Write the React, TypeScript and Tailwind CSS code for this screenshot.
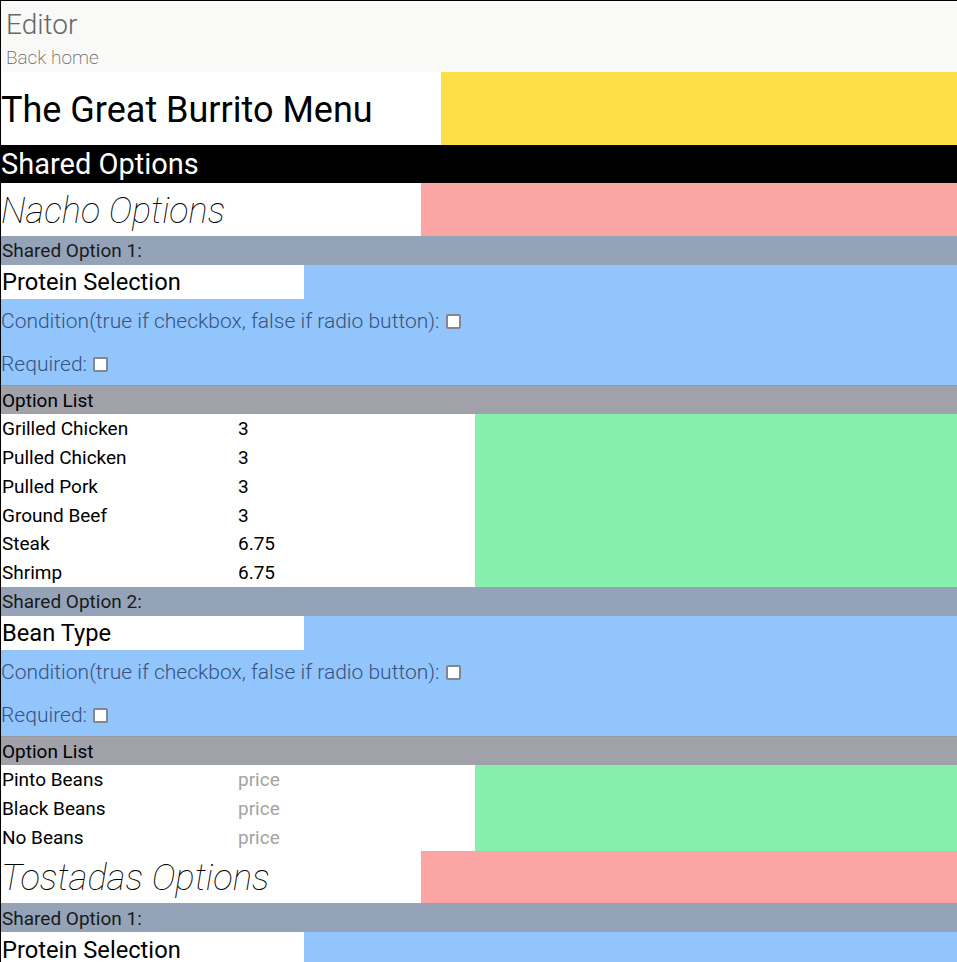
import React from "react";

type Opt = { name: string; price?: string };

function Checkbox() {
  return (
    <span className="inline-block w-[15px] h-[15px] bg-white border-2 border-[#85858f] rounded-[2px] ml-[6px] shrink-0" />
  );
}

function SharedOption({ index, title, options }: { index: number; title: string; options: Opt[] }) {
  return (
    <div>
      <div className="h-[29px] bg-[#94a3b8] flex items-center pl-[1px] pt-[2px] text-[19px] text-[#1a1a1a]">
        Shared Option {index}:
      </div>
      <div className="bg-[#93c5fd]">
        <div className="h-[34px] w-[303px] bg-white flex items-center pl-[1px] pt-[2px] text-[23.7px] text-black">
          {title}
        </div>
        <div className="h-[43px] flex items-center pt-[2px] text-[21px] font-light text-[#36527e]">
          <span>Condition(true if checkbox, false if radio button):</span>
          <Checkbox />
        </div>
        <div className="h-[43px] flex items-center pt-[2px] text-[21px] font-light text-[#36527e]">
          <span>Required:</span>
          <Checkbox />
        </div>
      </div>
      <div className="h-[29px] bg-[#a1a1aa] border-t border-[#999] flex items-center pl-[1px] pt-[2px] text-[19px] text-black">
        Option List
      </div>
      <div className="bg-[#86efac]">
        {options.map((o) => (
          <div key={o.name} className="flex w-[474px] bg-white h-[28.83px] items-center pt-[2px] text-[19px]">
            <div className="w-[237px] pl-[1px] text-black">{o.name}</div>
            <div className={o.price ? "text-black" : "text-[#a3a3a3]"}>{o.price ?? "price"}</div>
          </div>
        ))}
      </div>
    </div>
  );
}

const proteins: Opt[] = [
  { name: "Grilled Chicken", price: "3" },
  { name: "Pulled Chicken", price: "3" },
  { name: "Pulled Pork", price: "3" },
  { name: "Ground Beef", price: "3" },
  { name: "Steak", price: "6.75" },
  { name: "Shrimp", price: "6.75" },
];

const beans: Opt[] = [{ name: "Pinto Beans" }, { name: "Black Beans" }, { name: "No Beans" }];

export default function App() {
  return (
    <div className="font-['Roboto',sans-serif] border-l border-t border-black min-h-screen overflow-hidden">
      <div className="h-[71px] bg-[#f9f9f7] pl-[5px] pt-[4px]">
        <div className="text-[28px] font-light text-[#666] leading-[40px]">Editor</div>
        <div className="text-[19px] font-extralight text-[#666] leading-[26px]">Back home</div>
      </div>
      <div className="bg-[#fde047]">
        <div className="h-[73px] w-[440px] bg-white flex items-center pt-[2px] text-4xl text-black">
          The Great Burrito Menu
        </div>
      </div>
      <div className="h-[38px] bg-black text-white text-[29px] flex items-center pt-[2px]">Shared Options</div>

      <div className="bg-[#fca5a5]">
        <div className="h-[53px] w-[420px] bg-white flex items-center pt-[2px] text-4xl italic font-thin text-black">
          Nacho Options
        </div>
      </div>
      <SharedOption index={1} title="Protein Selection" options={proteins} />
      <SharedOption index={2} title="Bean Type" options={beans} />

      <div className="bg-[#fca5a5]">
        <div className="h-[52px] w-[420px] bg-white flex items-center pt-[2px] text-[36.5px] italic font-thin text-black">
          Tostadas Options
        </div>
      </div>
      <SharedOption index={1} title="Protein Selection" options={proteins} />
    </div>
  );
}
